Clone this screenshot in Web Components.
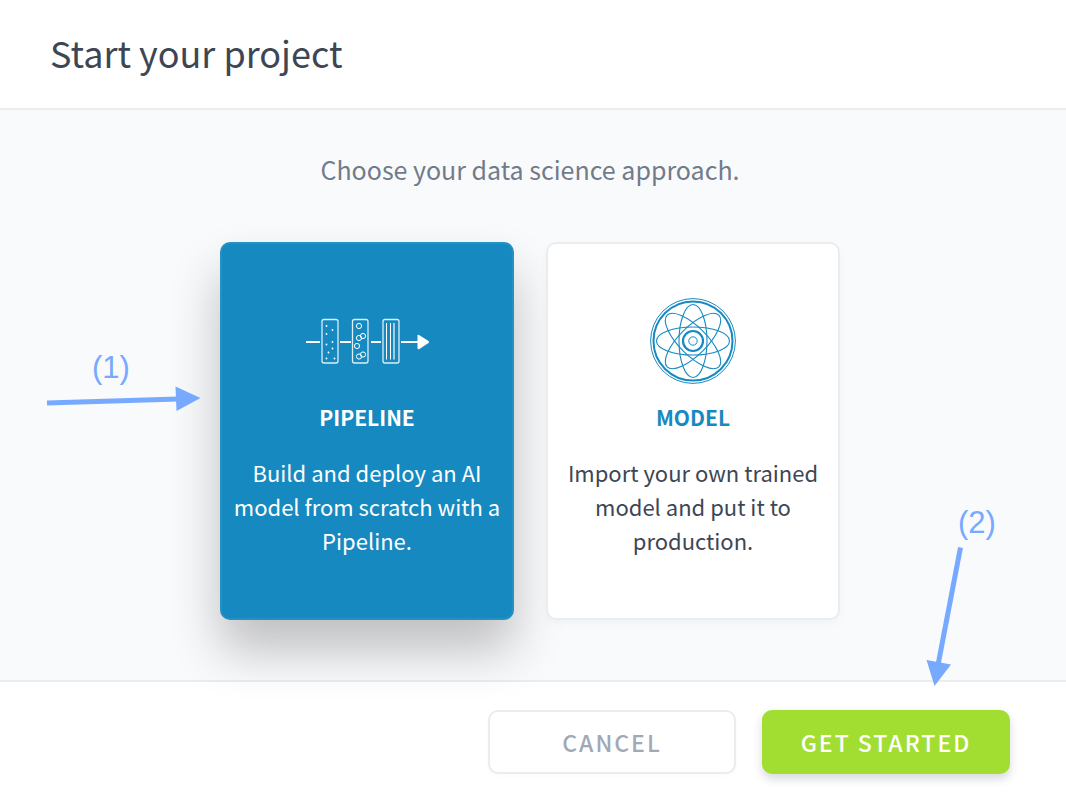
<!DOCTYPE html>
<html lang="en">
<head>
<meta charset="utf-8">
<meta name="viewport" content="width=device-width, initial-scale=1">
<title>Start your project</title>
<style>
  body {
    margin: 0;
    font-family: "Noto Sans CJK SC", "Open Sans", sans-serif;
    color: #3d4654;
    background: #fff;
  }
</style>
</head>
<body>
<project-dialog>
  <span slot="title">Start your project</span>
  <span slot="prompt">Choose your data science approach.</span>
  <approach-card selected>
    <pipeline-icon slot="icon"></pipeline-icon>
    <span slot="name">PIPELINE</span>
    Build and deploy an AI model from scratch with a Pipeline.
  </approach-card>
  <approach-card>
    <model-icon slot="icon"></model-icon>
    <span slot="name">MODEL</span>
    Import your own trained model and put it to production.
  </approach-card>
  <step-marker slot="markers" step="1"></step-marker>
  <step-marker slot="markers" step="2"></step-marker>
  <action-button slot="actions">CANCEL</action-button>
  <action-button slot="actions" primary>GET STARTED</action-button>
</project-dialog>

<script>
class ShadowElement extends HTMLElement {
  constructor() {
    super();
    this.attachShadow({ mode: 'open' }).innerHTML = this.constructor.markup;
  }
}

customElements.define('pipeline-icon', class extends ShadowElement {
  static markup = `
    <style>:host { display: block; } svg { display: block; }</style>
    <svg width="124" height="86" viewBox="-1 0 124 86" fill="none" stroke="currentColor" aria-hidden="true">
      <path stroke-width="2" d="M0 44H14M34 44H45M65 44H75M95 44H113"/>
      <path fill="currentColor" stroke="none" d="M111.500 37.500Q111.500 36.500 113 37L122.500 43Q123.500 44 122.500 45L113 51.300Q111.500 51.500 111.500 50.500Z"/>
      <g stroke-width="1.300" stroke-opacity=".85">
        <rect x="16" y="21.500" width="16" height="43.500" rx="2"/>
        <rect x="46.500" y="21.500" width="15.500" height="43.500" rx="2"/>
        <rect x="77" y="21.500" width="16" height="43.500" rx="2"/>
      </g>
      <g fill="currentColor" stroke="none">
        <circle cx="20.500" cy="28" r=".9"/><circle cx="26.500" cy="32" r=".9"/>
        <circle cx="20.500" cy="36" r=".9"/><circle cx="26.500" cy="44" r=".9"/>
        <circle cx="20.500" cy="46.500" r=".9"/><circle cx="26.500" cy="50.500" r=".9"/>
        <circle cx="22.500" cy="54.500" r=".9"/><circle cx="20.500" cy="60.500" r=".9"/>
        <circle cx="28.500" cy="60.500" r=".9"/>
      </g>
      <g stroke-width="1">
        <circle cx="53" cy="28" r="2.600"/><circle cx="57" cy="38" r="2.600"/>
        <circle cx="53" cy="40" r="2.600"/><circle cx="51" cy="48" r="2.600"/>
        <circle cx="57" cy="56.500" r="2.600"/><circle cx="53" cy="58.500" r="2.600"/>
      </g>
      <path d="M80.500 25V61.500M84.500 25V61.500"/>
      <path stroke-width="1.800" stroke-opacity=".65" d="M88 25V61.500"/>
    </svg>`;
});

customElements.define('model-icon', class extends ShadowElement {
  static markup = `
    <style>:host { display: block; } svg { display: block; }</style>
    <svg width="86" height="86" viewBox="0 0 86 86" fill="none" stroke="currentColor" aria-hidden="true">
      <circle cx="43" cy="43" r="42.400" stroke-width="1"/>
      <circle cx="43" cy="43" r="39.500" stroke-width="2"/>
      <g stroke-width="1.100">
        <ellipse cx="43" cy="43" rx="36.500" ry="14"/>
        <ellipse cx="43" cy="43" rx="36.500" ry="14" transform="rotate(45 43 43)"/>
        <ellipse cx="43" cy="43" rx="36.500" ry="14" transform="rotate(90 43 43)"/>
        <ellipse cx="43" cy="43" rx="36.500" ry="14" transform="rotate(135 43 43)"/>
      </g>
      <circle cx="43" cy="43" r="10" stroke-width="2.200"/>
      <circle cx="43" cy="43" r="4.200" stroke-width="1"/>
    </svg>`;
});

customElements.define('approach-card', class extends ShadowElement {
  static observedAttributes = ['selected'];
  static markup = `
    <style>
      :host { display: block; flex: 0 1 294px; }
      button {
        box-sizing: border-box; width: 100%; height: 100%; min-height: 378px;
        display: flex; flex-direction: column; align-items: center;
        padding: 54px 10px 32px; border: 2px solid #e9edf0; border-radius: 10px;
        background: #fff; color: #3d4654; font: inherit; cursor: pointer;
        box-shadow: 0 4px 8px rgba(0, 0, 0, .03);
      }
      .accent { color: #168ac0; }
      .name { margin: 16px 0 21px; font-size: 21px; line-height: 34px; font-weight: 700; }
      .text { font-size: 22px; line-height: 34px; }
      :host([selected]) button {
        background: #168ac0; border-color: #268fc4; color: #fff;
        box-shadow: 0 30px 50px rgba(0, 0, 0, .24);
      }
      :host([selected]) .accent { color: #fff; }
    </style>
    <button type="button">
      <slot class="accent" name="icon"></slot>
      <span class="name accent"><slot name="name"></slot></span>
      <span class="text"><slot></slot></span>
    </button>`;
  connectedCallback() {
    this.attributeChangedCallback();
    this.shadowRoot.querySelector('button').onclick = () => {
      for (const card of this.parentElement.querySelectorAll('approach-card'))
        card.toggleAttribute('selected', card === this);
    };
  }
  attributeChangedCallback() {
    this.shadowRoot.querySelector('button')
      .setAttribute('aria-pressed', this.hasAttribute('selected'));
  }
});

customElements.define('action-button', class extends ShadowElement {
  static markup = `
    <style>
      :host { display: block; flex: 0 1 248px; }
      button {
        box-sizing: border-box; width: 100%; height: 64px; padding: 0 8px;
        border: 2px solid #e9edf0; border-radius: 10px; background: #fff; color: #a0a9b5;
        font: inherit; font-size: 23px; font-weight: 500; letter-spacing: 2px; cursor: pointer;
        box-shadow: 0 2px 4px rgba(0, 0, 0, .02);
      }
      :host([primary]) button {
        border-color: #a1de31; background: #a1de31; color: #fff;
        box-shadow: 0 5px 10px rgba(40, 50, 80, .18);
      }
    </style>
    <button type="button"><slot></slot></button>`;
});

customElements.define('step-marker', class extends ShadowElement {
  static markup = `
    <style>
      :host {
        display: block; position: absolute; pointer-events: none; color: #77a9ff;
        font: 31px/34px "Liberation Sans", Arial, sans-serif;
      }
      :host([step="1"]) { left: 46px; top: 241px; width: 156px; }
      :host([step="2"]) { right: 56px; bottom: -6px; width: 84px; }
      .label { display: block; }
      :host([step="1"]) .label { padding-left: 46px; }
      :host([step="2"]) .label { padding-left: 32px; }
      svg { display: block; fill: currentColor; stroke: currentColor; }
    </style>
    <span class="label"></span><div class="arrow"></div>`;
  connectedCallback() {
    const step = this.getAttribute('step');
    this.shadowRoot.querySelector('.label').textContent = `(${step})`;
    this.shadowRoot.querySelector('.arrow').innerHTML = step === '1'
      ? `<svg width="156" height="30" viewBox="0 0 156 30" aria-hidden="true">
           <path stroke-width="5" d="M1 18L132 14"/>
           <path stroke="none" d="M129.500 1.500L154.500 13L130.500 26Z"/></svg>`
      : `<svg width="84" height="146" viewBox="0 0 84 146" aria-hidden="true">
           <path stroke-width="5" d="M34.500 7.500L12 125"/>
           <path stroke="none" d="M0.500 120L25 124.500L8.500 146Z"/></svg>`;
  }
});

customElements.define('project-dialog', class extends ShadowElement {
  static markup = `
    <style>
      :host { display: flex; flex-direction: column; min-height: 100vh; }
      header { padding: 24px 50px 28px; border-bottom: 2px solid #e9edf0; }
      h1 { margin: 0; font-size: 36px; line-height: 56px; font-weight: 400; }
      main {
        position: relative; flex: 1; padding: 40px 22px 60px 16px; background: #f9fafc;
      }
      p { margin: 0; text-align: center; font-size: 25px; line-height: 38px; color: #717b8a; }
      .cards { display: flex; justify-content: center; gap: 32px; margin-top: 54px; }
      footer {
        display: flex; justify-content: flex-end; gap: 26px;
        padding: 28px 56px 26px; border-top: 2px solid #e9edf0;
      }
    </style>
    <header><h1><slot name="title"></slot></h1></header>
    <main>
      <p><slot name="prompt"></slot></p>
      <div class="cards"><slot></slot></div>
      <slot name="markers"></slot>
    </main>
    <footer><slot name="actions"></slot></footer>`;
});
</script>
</body>
</html>
